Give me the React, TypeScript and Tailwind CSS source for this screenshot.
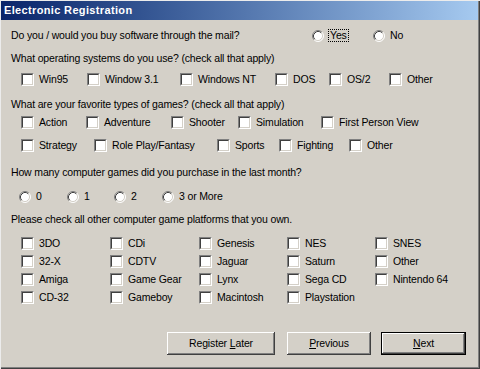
import React from "react";

const Checkbox = () => (
  <span className="block w-[13px] h-[13px] shrink-0 border border-t-[#808080] border-l-[#808080] border-b-white border-r-white">
    <span className="block w-full h-full bg-white border border-t-[#404040] border-l-[#404040] border-b-[#d4d0c8] border-r-[#d4d0c8]" />
  </span>
);

const Radio = () => (
  <svg width="12" height="12" viewBox="0 0 12 12" className="block shrink-0">
    <circle cx="6" cy="6" r="5" fill="#fff" />
    <path d="M2.11 9.89 A5.5 5.5 0 0 1 9.89 2.11" fill="none" stroke="#808080" strokeWidth="1" />
    <path d="M9.89 2.11 A5.5 5.5 0 0 1 2.11 9.89" fill="none" stroke="#ffffff" strokeWidth="1" />
    <path d="M2.82 9.18 A4.5 4.5 0 0 1 9.18 2.82" fill="none" stroke="#404040" strokeWidth="1" />
    <path d="M9.18 2.82 A4.5 4.5 0 0 1 2.82 9.18" fill="none" stroke="#d4d0c8" strokeWidth="1" />
  </svg>
);

type Item = { label: string; w: string };

const CheckItem = ({ label, w }: Item) => (
  <div className={`flex items-center gap-[5px] ${w}`}>
    <Checkbox />
    <span className="whitespace-nowrap">{label}</span>
  </div>
);

const RadioItem = ({ label, w }: Item) => (
  <div className={`flex items-center gap-[5px] ${w}`}>
    <Radio />
    <span className="whitespace-nowrap">{label}</span>
  </div>
);

const osItems: Item[] = [
  { label: "Win95", w: "w-[66px]" },
  { label: "Window 3.1", w: "w-[93px]" },
  { label: "Windows NT", w: "w-[95px]" },
  { label: "DOS", w: "w-[54px]" },
  { label: "OS/2", w: "w-[60px]" },
  { label: "Other", w: "w-[60px]" },
];

const games1: Item[] = [
  { label: "Action", w: "w-[65px]" },
  { label: "Adventure", w: "w-[85px]" },
  { label: "Shooter", w: "w-[67px]" },
  { label: "Simulation", w: "w-[83px]" },
  { label: "First Person View", w: "w-[120px]" },
];

const games2: Item[] = [
  { label: "Strategy", w: "w-[73px]" },
  { label: "Role Play/Fantasy", w: "w-[123px]" },
  { label: "Sports", w: "w-[62px]" },
  { label: "Fighting", w: "w-[70px]" },
  { label: "Other", w: "w-[60px]" },
];

const counts: Item[] = [
  { label: "0", w: "w-[48px]" },
  { label: "1", w: "w-[47px]" },
  { label: "2", w: "w-[48px]" },
  { label: "3 or More", w: "w-[80px]" },
];

const platforms = [
  "3DO", "32-X", "Amiga", "CD-32",
  "CDi", "CDTV", "Game Gear", "Gameboy",
  "Genesis", "Jaguar", "Lynx", "Macintosh",
  "NES", "Saturn", "Sega CD", "Playstation",
  "SNES", "Other", "Nintendo 64",
];

const bevel =
  "shadow-[inset_-1px_-1px_#404040,inset_1px_1px_#ffffff,inset_-2px_-2px_#808080,inset_2px_2px_#d4d0c8]";

export default function App() {
  return (
    <div className="w-[480px] h-[369px] bg-[#d4d0c8] text-black text-[10.5px] tracking-[-0.15px] leading-[13px] font-['Liberation_Sans',Arial,sans-serif] flex flex-col shadow-[inset_1px_1px_#ececec,inset_-1px_-1px_#404040,inset_-2px_-2px_#808080] overflow-hidden">
      <div className="mt-[1px] ml-[1px] mr-[2px] h-[19px] flex items-center pl-[3px] bg-gradient-to-r from-[#0a246a] to-[#a6caf0]">
        <span className="text-white font-bold text-[11px] tracking-[0.35px]">Electronic Registration</span>
      </div>

      <div className="flex flex-col pl-[11px]">
        <div className="mt-[4px] h-[23px] flex items-center">
          <span className="w-[301px] whitespace-nowrap">Do you / would you buy software through the mail?</span>
          <div className="flex items-center gap-[4px] w-[61px]">
            <Radio />
            <span className="border border-dotted border-black px-[1px] leading-[11px] py-[0px]">Yes</span>
          </div>
          <div className="flex items-center gap-[5px]">
            <Radio />
            <span>No</span>
          </div>
        </div>

        <div className="h-[23px] flex items-center">
          <span>What operating systems do you use? (check all that apply)</span>
        </div>

        <div className="h-[19px] flex items-center pl-[10px]">
          {osItems.map((i) => (
            <CheckItem key={i.label} {...i} />
          ))}
        </div>

        <div className="mt-[6px] h-[18px] flex items-center">
          <span>What are your favorite types of games? (check all that apply)</span>
        </div>

        <div className="h-[19px] flex items-center pl-[10px]">
          {games1.map((i) => (
            <CheckItem key={i.label} {...i} />
          ))}
        </div>

        <div className="mt-[4px] h-[19px] flex items-center pl-[10px]">
          {games2.map((i) => (
            <CheckItem key={i.label} {...i} />
          ))}
        </div>

        <div className="mt-[8px] h-[19px] flex items-center">
          <span>How many computer games did you purchase in the last month?</span>
        </div>

        <div className="mt-[5px] h-[19px] flex items-center pl-[8px]">
          {counts.map((i) => (
            <RadioItem key={i.label} {...i} />
          ))}
        </div>

        <div className="mt-[4px] h-[19px] flex items-center">
          <span>Please check all other computer game platforms that you own.</span>
        </div>

        <div className="mt-[5px] pl-[10px] grid grid-flow-col grid-rows-[repeat(4,18px)] grid-cols-[89px_89px_88px_88px_100px]">
          {platforms.map((p) => (
            <div key={p} className="flex items-center gap-[5px]">
              <Checkbox />
              <span className="whitespace-nowrap">{p}</span>
            </div>
          ))}
        </div>
      </div>

      <div className="mt-[26px] pl-[167px] flex items-center gap-[12px]">
        <button className={`w-[108px] h-[23px] bg-[#d4d0c8] flex items-center justify-center ${bevel}`}>
          <span>
            Register <span className="underline">L</span>ater
          </span>
        </button>
        <button className={`w-[84px] h-[23px] bg-[#d4d0c8] flex items-center justify-center ${bevel}`}>
          <span>
            <span className="underline">P</span>revious
          </span>
        </button>
        <button className="ml-[-2px] w-[85px] h-[23px] border border-black bg-[#d4d0c8]">
          <span className={`w-full h-full flex items-center justify-center ${bevel}`}>
            <span>
              <span className="underline">N</span>ext
            </span>
          </span>
        </button>
      </div>
    </div>
  );
}
